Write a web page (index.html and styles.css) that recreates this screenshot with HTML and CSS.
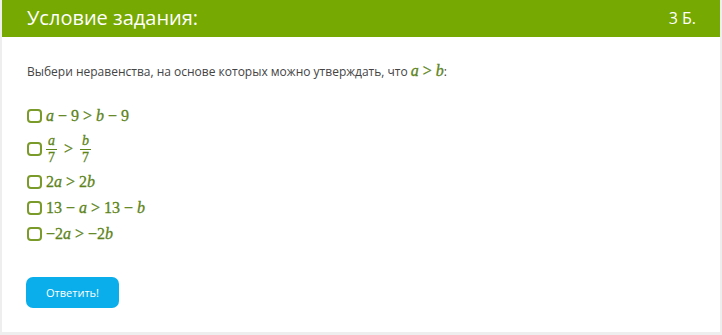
FILE: index.html
```html
<!DOCTYPE html>
<html lang="ru">
<head>
    <meta charset="UTF-8">
    <title>Условие задания</title>
    <link rel="stylesheet" href="styles.css">
</head>
<body>
    <div class="task">
        <div class="task-header">
            <span class="task-title">Условие задания:</span>
            <span class="task-points">3 Б.</span>
        </div>

        <div class="task-body">
            <p class="question">
                Выбери неравенства, на основе которых можно утверждать, что
                <span class="math"><i>a</i><span class="op">&gt;</span><i>b</i></span>:
            </p>

            <ul class="options">
                <li class="option">
                    <span class="check"></span>
                    <span class="math"><i>a</i><span class="op">−</span>9<span class="op">&gt;</span><i>b</i><span class="op">−</span>9</span>
                </li>
                <li class="option option-frac">
                    <span class="check"></span>
                    <span class="math">
                        <span class="frac"><span class="num"><i>a</i></span><span class="den">7</span></span>
                        <span class="op">&gt;</span>
                        <span class="frac"><span class="num"><i>b</i></span><span class="den">7</span></span>
                    </span>
                </li>
                <li class="option">
                    <span class="check"></span>
                    <span class="math">2<i>a</i><span class="op">&gt;</span>2<i>b</i></span>
                </li>
                <li class="option">
                    <span class="check"></span>
                    <span class="math">13<span class="op">−</span><i>a</i><span class="op">&gt;</span>13<span class="op">−</span><i>b</i></span>
                </li>
                <li class="option">
                    <span class="check"></span>
                    <span class="math">−2<i>a</i><span class="op">&gt;</span>−2<i>b</i></span>
                </li>
            </ul>

            <button class="answer-btn">Ответить!</button>
        </div>
    </div>
</body>
</html>
```

FILE: styles.css
```css
* {
    margin: 0;
    padding: 0;
    box-sizing: border-box;
}

body {
    background-color: #eeeeee;
    font-family: "Open Sans", Arial, sans-serif;
}

.task {
    margin: 0 2px;
    height: 332px;
    background-color: white;
}

.task-header {
    display: flex;
    justify-content: space-between;
    align-items: center;
    height: 37px;
    padding: 0 24px 2px 25px;
    background-color: #76a901;
    color: white;
}

.task-title {
    font-size: 20px;
}

.task-points {
    font-size: 16px;
}

.task-body {
    padding: 24px 24px 0 25px;
}

.question {
    font-size: 12px;
    color: #444;
    line-height: 20px;
}

.math {
    font-family: "Liberation Serif", "Times New Roman", serif;
    font-size: 16px;
    color: #5d8419;
    display: inline-flex;
    align-items: center;
    -webkit-text-stroke: 0.3px #5d8419;
}

.math i {
    font-style: italic;
}

.op {
    margin: 0 4px;
}

.options {
    list-style: none;
    margin-top: 21px;
}

.option {
    display: flex;
    align-items: center;
    gap: 4px;
    height: 26px;
}

.option-frac {
    height: 40px;
}

.option-frac .op {
    margin: 0 7px;
}

.check {
    width: 15px;
    height: 14px;
    border: 2px solid #7a9a2a;
    border-radius: 4px;
}

.frac {
    display: inline-flex;
    flex-direction: column;
    align-items: center;
    font-size: 14px;
    line-height: 16px;
}

.num {
    border-bottom: 1px solid #5d8419;
    padding: 0 2px;
}

.answer-btn {
    margin-top: 30px;
    margin-left: -1px;
    width: 93px;
    height: 31px;
    border: none;
    border-radius: 7px;
    background-color: #0aaeea;
    color: white;
    font-family: "Open Sans", Arial, sans-serif;
    font-size: 11px;
    cursor: pointer;
}
```
